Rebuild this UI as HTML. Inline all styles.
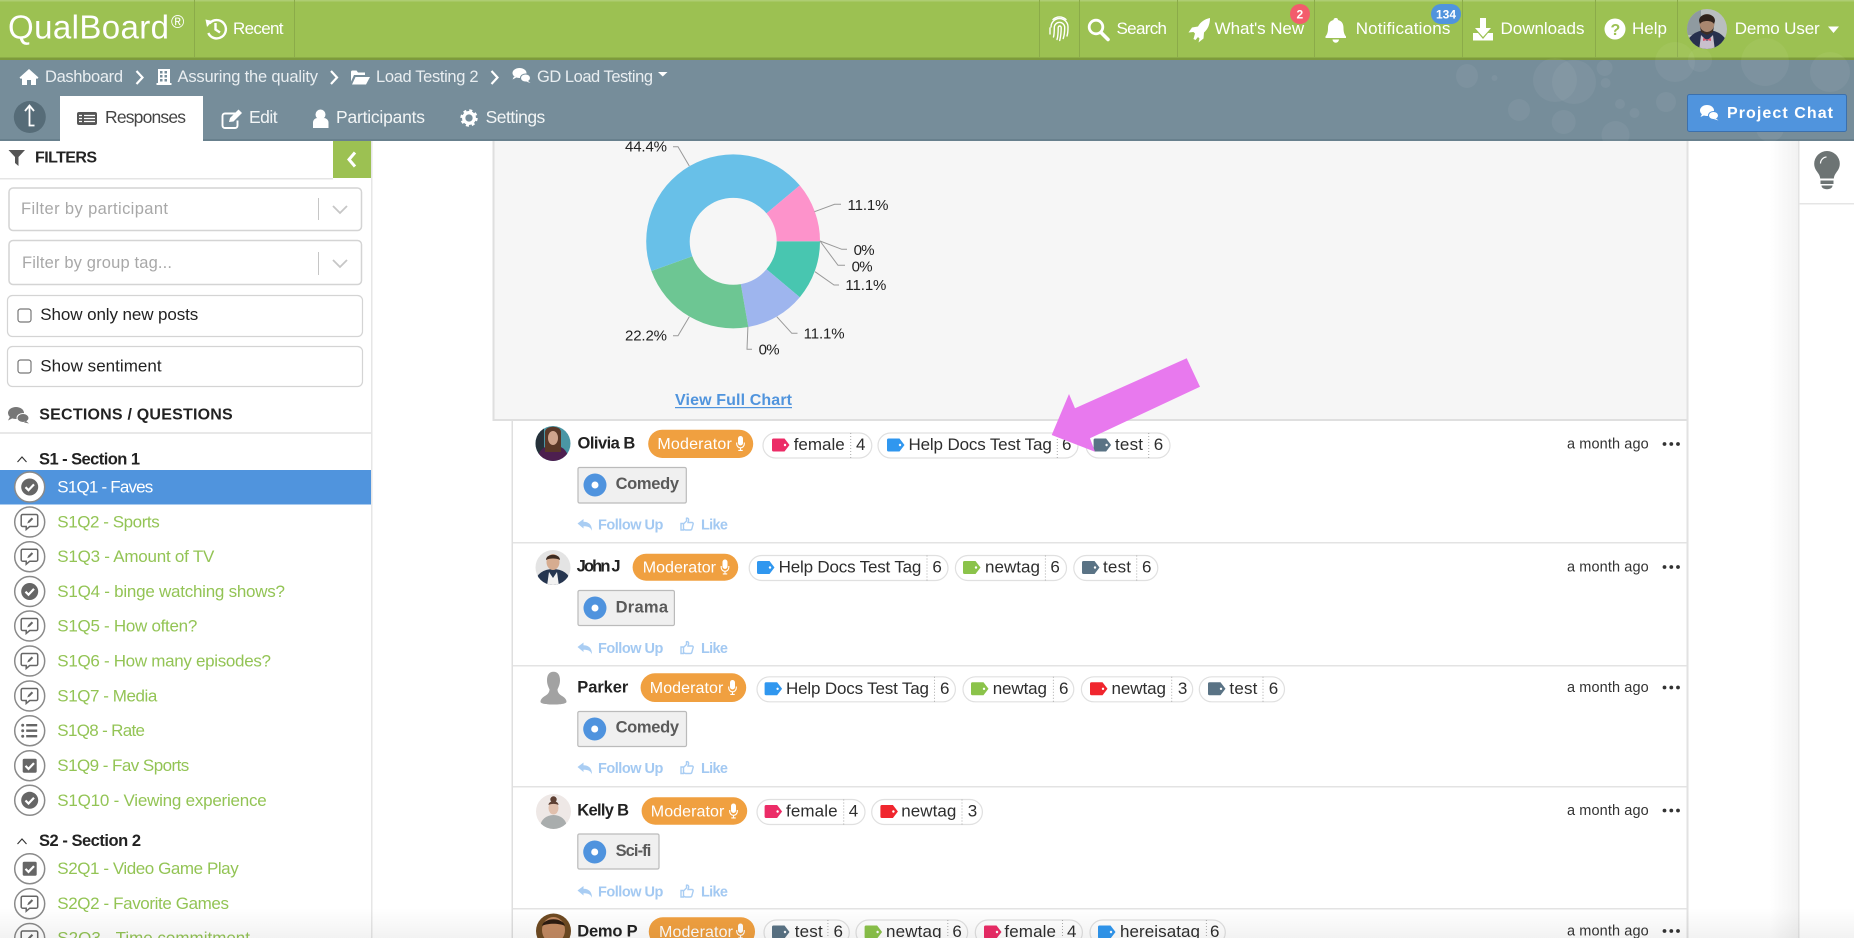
<!DOCTYPE html>
<html lang="en"><head><meta charset="utf-8"><title>QualBoard</title>
<style>
html,body{margin:0;padding:0;width:1854px;height:938px;overflow:hidden;background:#fff}
svg{display:block;filter:blur(.35px)}
text{font-family:"Liberation Sans",sans-serif;font-size:16px;fill:#333}
.n{fill:#fff;font-size:17px}
.b{fill:#e9eef1;font-size:16.500px}
.tb{fill:#f2f5f6;font-size:17.500px}
.ph{fill:#a8a8a8;font-size:16.500px}
.h{font-weight:bold;fill:#222;font-size:16px;transform:translateY(-.7px)}
.q{fill:#93c455;font-size:17px;transform:translateY(-.5px)}
.nm{font-weight:bold;fill:#222;font-size:16.500px}
.mod{fill:#fff;font-size:16px}
.t{fill:#2e2e2e;font-size:17px;transform:translateY(-1px)}
.ans{fill:#5a5a5a;font-size:16.500px;font-weight:bold}
.f{fill:#a3c9f2;font-size:14.500px;font-weight:bold}
.tm{fill:#333;font-size:14.500px}
.c{fill:#222;font-size:15px}
</style></head><body>
<svg xmlns="http://www.w3.org/2000/svg" width="1854" height="938" viewBox="0 0 1854 938" lengthAdjust="spacingAndGlyphs">
<defs>
<linearGradient id="hdr" x1="0" x2="1" y1="0" y2="0"><stop offset="0" stop-color="#7a919e"/><stop offset="1" stop-color="#72889500"/><stop offset="1" stop-color="#728895"/></linearGradient>
<linearGradient id="rs" x1="0" x2="1" y1="0" y2="0"><stop offset="0" stop-color="#fff"/><stop offset="1" stop-color="#f2f2f2"/></linearGradient>
<linearGradient id="bf" x1="0" x2="0" y1="0" y2="1"><stop offset="0" stop-color="#000" stop-opacity="0"/><stop offset="1" stop-color="#000" stop-opacity=".05"/></linearGradient>
<symbol id="tag" width="18" height="13" viewBox="0 0 18 13" overflow="visible"><path fill-rule="evenodd" d="M1.500 0H12.500L17.500 6.500L12.500 13H1.500A1.500 1.500 0 0 1 0 11.500V1.500A1.500 1.500 0 0 1 1.500 0ZM13 5.300a1.200 1.200 0 1 0 .01 0Z"/></symbol>
<symbol id="ck" width="32" height="32" viewBox="0 0 32 32"><circle cx="16" cy="16" r="15" fill="#fff" stroke="#8a8a8a" stroke-width="1.500"/><circle cx="16" cy="16" r="8.500" fill="#666"/><path d="M11.800 16.200l3 3 5.500-5.800" fill="none" stroke="#fff" stroke-width="2.200"/></symbol>
<symbol id="bb" width="32" height="32" viewBox="0 0 32 32"><circle cx="16" cy="16" r="15" fill="#fff" stroke="#8a8a8a" stroke-width="1.500"/><path d="M9.500 8.500h13a1.500 1.500 0 0 1 1.500 1.500v9a1.500 1.500 0 0 1-1.500 1.500h-6.500l-3.500 3v-3h-3.500a1.500 1.500 0 0 1-1.500-1.500v-9a1.500 1.500 0 0 1 1.500-1.500z" fill="none" stroke="#666" stroke-width="1.500"/><path d="M13.500 17.500l1-2.500 3.500-3.500 1.500 1.500-3.500 3.500z" fill="#666"/></symbol>
<symbol id="ls" width="32" height="32" viewBox="0 0 32 32"><circle cx="16" cy="16" r="15" fill="#fff" stroke="#8a8a8a" stroke-width="1.500"/><path d="M12.500 10.500h11M12.500 16h11M12.500 21.500h11" stroke="#666" stroke-width="2.400"/><circle cx="9" cy="10.500" r="1.500" fill="#666"/><circle cx="9" cy="16" r="1.500" fill="#666"/><circle cx="9" cy="21.500" r="1.500" fill="#666"/></symbol>
<symbol id="cb" width="32" height="32" viewBox="0 0 32 32"><circle cx="16" cy="16" r="15" fill="#fff" stroke="#8a8a8a" stroke-width="1.500"/><rect x="9" y="9" width="14" height="14" rx="1.500" fill="#666"/><path d="M11.800 16.200l3 3 5.500-5.800" fill="none" stroke="#fff" stroke-width="2.200"/></symbol>
<symbol id="rp" width="15" height="12" viewBox="0 0 15 12"><path fill="#a9cdf3" d="M0 4.500L6 0v2.800c5 0 8.500 2.800 8.500 9-1.600-3.600-4-4.500-8.500-4.500V9.500z"/></symbol>
<symbol id="th" width="14" height="14" viewBox="0 0 14 14"><path fill="none" stroke="#a9cdf3" stroke-width="1.400" d="M1 6.500h2.500v6.500H1zM3.500 7L6.500 4V1.200c1.500-.5 2.500.7 2 2.500L8 5.500h4c1 0 1.500 1 1 2l-1.200 4.500c-.3.800-.8 1-1.500 1H5.500l-2-.8"/></symbol>
<symbol id="mic" width="9" height="15" viewBox="0 0 9 15"><rect x="2" y="0" width="5" height="9.500" rx="2.500" fill="#fff"/><path d="M.7 6.500v1.500a3.800 3.800 0 0 0 7.600 0V6.500M4.500 12v2.500M2.300 14.400h4.400" fill="none" stroke="#fff" stroke-width="1.100"/></symbol>
<clipPath id="a1"><circle cx="553" cy="443.500" r="17.500"/></clipPath>
<clipPath id="a2"><circle cx="553" cy="567.500" r="17.500"/></clipPath>
<clipPath id="a4"><circle cx="553.500" cy="811.500" r="17.500"/></clipPath>
<clipPath id="a5"><circle cx="553.500" cy="931" r="17.500"/></clipPath>
<clipPath id="au"><circle cx="1707" cy="29" r="20"/></clipPath>
</defs>

<rect width="1854" height="938" fill="#fff"/>

<!-- chart panel -->
<rect x="493.500" y="130" width="1194" height="290" fill="#f6f6f6" stroke="#dfdfdf" stroke-width="2"/>
<rect x="1686.500" y="141" width="2" height="797" fill="#e2e2e2"/>
<rect x="511.500" y="421" width="1.500" height="517" fill="#dfdfdf"/>
<g fill-rule="evenodd">
<path fill="#48c6b0" d="M820 241.300A87 87 0 0 1 799.800 297.200L766.500 269.200A43.500 43.500 0 0 0 776.700 241.300Z"/>
<path fill="#9eb5ee" d="M799.800 297.200A87 87 0 0 1 748.300 327L740.800 284.100A43.500 43.500 0 0 0 766.500 269.200Z"/>
<path fill="#6dc693" d="M748.300 327A87 87 0 0 1 651.400 271L692.300 256.200A43.500 43.500 0 0 0 740.800 284.100Z"/>
<path fill="#68c0e8" d="M651.400 271A87 87 0 0 1 799.800 185.400L766.500 213.400A43.500 43.500 0 0 0 692.300 256.200Z"/>
<path fill="#fd93cb" d="M799.800 185.400A87 87 0 0 1 820 241.300L776.700 241.300A43.500 43.500 0 0 0 766.500 213.400Z"/>
</g>
<g fill="none" stroke="#999" stroke-width="1">
<path d="M689.300 166L678 146.700H673"/><path d="M814.500 211.700L834.600 204.300H841"/><path d="M820 241L841.800 249.300H847"/><path d="M820 241L838 265.300H845"/><path d="M815 271.700L834 285H839"/><path d="M776.800 316.700L791.800 333.300H797.500"/><path d="M747.900 326.700L747 349.300H752"/><path d="M689.300 316.700L678 335.700H673"/>
</g>
<text class="c" x="625" y="151.700" textLength="42">44.4%</text>
<text class="c" x="847.500" y="210" textLength="41">11.1%</text>
<text class="c" x="853.600" y="255" textLength="21">0%</text>
<text class="c" x="851.600" y="271.300" textLength="21">0%</text>
<text class="c" x="845.400" y="290" textLength="41">11.1%</text>
<text class="c" x="803.600" y="338.300" textLength="41">11.1%</text>
<text class="c" x="758.600" y="354.300" textLength="21">0%</text>
<text class="c" x="625" y="340.700" textLength="42">22.2%</text>
<text x="675" y="405" textLength="117" style="fill:#5094dd;font-weight:bold;font-size:16px">View Full Chart</text>
<rect x="675" y="407" width="117" height="1.200" fill="#5094dd"/>

<!-- top bar -->
<rect width="1854" height="60" fill="#9cc152"/>
<rect width="1854" height="1.500" fill="#aecd73"/>
<rect y="57.500" width="1854" height="2.500" fill="#7d9b3c"/>
<g fill="#8bab49">
<rect x="194" y="0" width="1" height="58"/><rect x="294" y="0" width="1" height="58"/>
<rect x="1039" y="0" width="1" height="58"/><rect x="1079" y="0" width="1" height="58"/><rect x="1177" y="0" width="1" height="58"/><rect x="1314" y="0" width="1" height="58"/><rect x="1462" y="0" width="1" height="58"/><rect x="1595" y="0" width="1" height="58"/><rect x="1677" y="0" width="1" height="58"/>
</g>
<text x="8" y="38.500" textLength="161" style="fill:#fff;font-size:33px">QualBoard</text>
<text x="171" y="28" textLength="14" style="fill:#fff;font-size:18px">®</text>
<g fill="none" stroke="#fff" stroke-width="2.400"><path d="M209.500 23.500A9.200 9.200 0 1 1 208.300 33"/><path d="M215.500 23v6.500l4.500 3"/></g>
<path fill="#fff" d="M205.500 19.500l7 1.500-5.500 6z"/>
<text class="n" x="233" y="34" textLength="50.500">Recent</text>
<g fill="none" stroke="#fff" stroke-width="1.400" stroke-linecap="round">
<path d="M1051 27a8.500 8.500 0 0 1 17 0c0 3 0 6-1 9"/><path d="M1050 34v-6"/><path d="M1053.500 37c.8-3 .8-6 .8-9.500a5.200 5.200 0 0 1 10.400 0c0 4 0 7-1.500 11"/><path d="M1057 39.500c1.200-3.500 1.200-8 1.200-12a1.500 1.500 0 0 1 3 0c0 4.500-.2 8-1.500 13"/><path d="M1053 19.500a9.500 9.500 0 0 1 13 0"/>
</g>
<circle cx="1096" cy="27" r="6.800" fill="none" stroke="#fff" stroke-width="2.800"/><path d="M1101 32.500l7 7" stroke="#fff" stroke-width="3.600" stroke-linecap="round"/>
<text class="n" x="1116.500" y="34" textLength="50.500">Search</text>
<path fill="#fff" d="M1210 18c-5.500 1-9.500 4-12 8.500l-6 1-3.500 5 5-.5 1.500 1.500-1.500 5.500 2 1 2.500-3 1.500 1.500-1 4 5-4 .5-6c4-3.500 6-8.500 6-14.500z"/>
<text class="n" x="1214.600" y="34" textLength="89.500">What's New</text>
<path fill="#fff" d="M1336 18c1.300 0 2 .8 2 2 4 1 5.500 4 5.500 8 0 4.500 1 6.500 2.500 8.500v1.500h-20.500v-1.500c1.500-2 2.500-4 2.500-8.500 0-4 1.500-7 5.500-8 0-1.200.7-2 2.500-2z"/><path fill="#fff" d="M1332.500 39.500h6.500a3.200 3.200 0 0 1-6.500 0z"/>
<text class="n" x="1355.700" y="34" textLength="94.700">Notifications</text>
<path fill="#fff" d="M1480 18h6v10h5l-8 9-8-9h5z"/><path fill="#fff" d="M1473 33h5l5 6 5-6h5v7.500h-20z"/>
<text class="n" x="1500.500" y="34" textLength="84">Downloads</text>
<circle cx="1615" cy="29" r="10.500" fill="#fff"/>
<text x="1610.500" y="35" textLength="9" style="font-weight:bold;fill:#9cc152;font-size:16px">?</text>
<text class="n" x="1632" y="34" textLength="35">Help</text>
<rect x="1290" y="4" width="20" height="20" rx="10" fill="#f35c6c"/>
<text x="1296.500" y="18.500" textLength="7" style="fill:#fff;font-size:12px;font-weight:bold">2</text>
<rect x="1431" y="4" width="30" height="20" rx="10" fill="#5094dd"/>
<text x="1436" y="18.500" textLength="20" style="fill:#fff;font-size:12px;font-weight:bold">134</text>
<g clip-path="url(#au)">
<rect x="1687" y="9" width="40" height="40" fill="#b9bec0"/>
<rect x="1687" y="9" width="14" height="26" fill="#8f9aa0"/>
<ellipse cx="1707" cy="47" rx="21" ry="17" fill="#27304d"/>
<path d="M1701 35l6 6 6-6 2 16h-16z" fill="#c9c0cc"/>
<ellipse cx="1707" cy="23" rx="7.500" ry="9" fill="#a98770"/>
<path d="M1699 21c0-9 16-9 16 0l-1 3c-2-4-12-4-14 0z" fill="#2f221c"/>
<path d="M1700 26c2 8 12 8 14 0l-1 6-6 3-6-3z" fill="#3c2d25"/>
<path d="M1703 38l4 1.500 4-1.500v3l-4-1-4 1z" fill="#d8566c"/>
</g>
<text class="n" x="1734.700" y="34" textLength="85">Demo User</text>
<path fill="#fff" d="M1828 26.500h11l-5.500 6.500z"/>

<!-- sub header -->
<rect y="60" width="1854" height="81" fill="#768d9a"/>
<rect y="139" width="1854" height="2" fill="#68808d"/>
<g fill="#fff" fill-opacity=".05">
<ellipse cx="1467" cy="76" rx="11" ry="12"/><circle cx="1494.500" cy="78" r="3"/><circle cx="1519" cy="110" r="11"/><circle cx="1555" cy="80" r="22"/><circle cx="1574" cy="82" r="22"/><circle cx="1604.600" cy="68" r="8"/><circle cx="1605.600" cy="83" r="5"/><circle cx="1620" cy="104" r="5"/><circle cx="1634.500" cy="113" r="5"/><circle cx="1563.700" cy="122" r="12"/><circle cx="1615.500" cy="135" r="14"/><circle cx="1675" cy="62" r="20"/><circle cx="1700" cy="60" r="12"/><circle cx="1765" cy="62" r="24"/><circle cx="1830" cy="72" r="20"/><circle cx="1666" cy="102" r="10"/><circle cx="1770" cy="128" r="14"/>
</g>
<path fill="#fff" d="M29 69l9.500 8.500-1.500 1.500-1-.8V85h-5v-5h-4v5h-5v-6.800l-1 .8-1.500-1.500z"/>
<text class="b" x="45" y="82" textLength="78">Dashboard</text>
<path d="M136.500 71l6 6.500-6 6.500" fill="none" stroke="#fff" stroke-width="2.200"/>
<path fill="#fff" fill-rule="evenodd" d="M158 69h12v14h1.500v2h-15v-2h1.500zM160 71v2.500h2.500V71zm4.500 0v2.500h2.500V71zM160 75v2.500h2.500V75zm4.500 0v2.500h2.500V75zM160 79v2.500h2.500V79zm4.500 0v2.500h2.500V79z"/>
<text class="b" x="177.500" y="82" textLength="140.500">Assuring the quality</text>
<path d="M331 71l6 6.500-6 6.500" fill="none" stroke="#fff" stroke-width="2.200"/>
<path fill="#fff" d="M351 72a1.500 1.500 0 0 1 1.500-1.500h4l1.500 2h7v2.500h-11l-3 6.500zM355.500 77h14.500l-4 7.500h-14z"/>
<text class="b" x="376" y="82" textLength="102.500">Load Testing 2</text>
<path d="M491.500 71l6 6.500-6 6.500" fill="none" stroke="#fff" stroke-width="2.200"/>
<ellipse cx="519.500" cy="73" rx="7" ry="5" fill="#fff"/><path fill="#fff" d="M514 76.500l-1.500 3 4-2z"/><ellipse cx="525.500" cy="78" rx="5" ry="4" fill="#fff" stroke="#778e9b"/><path fill="#fff" d="M528 81l2.500 2-4.500-1.500z"/>
<text class="b" x="537" y="82" textLength="116">GD Load Testing</text>
<path fill="#fff" d="M658 72h9.500l-4.750 4.500z"/>
<ellipse cx="29.800" cy="117" rx="16" ry="16" fill="#566c78"/>
<path d="M29.500 106v19.500h5M25 111l4.500-5.500 4.500 5.500" fill="none" stroke="#fff" stroke-width="1.800"/>
<rect x="60" y="96" width="143" height="45" fill="#fff"/>
<rect x="77" y="112" width="20" height="13" rx="2" fill="#565656"/><path d="M79 115.500h3M84 115.500h11M79 118.500h3M84 118.500h11M79 121.500h3M84 121.500h11" stroke="#fff" stroke-width="1.300"/>
<text x="105" y="123" textLength="81" style="font-size:17.500px;fill:#444">Responses</text>
<path d="M236 113.500h-11a2.500 2.500 0 0 0-2.500 2.500v9.500a2.500 2.500 0 0 0 2.500 2.500h10a2.500 2.500 0 0 0 2.500-2.500v-5" fill="none" stroke="#fff" stroke-width="1.900"/><path fill="#fff" d="M229 122l1-4 8.500-8.500 3.500 3.500-8.500 8.500z"/>
<text class="tb" x="249" y="123" textLength="28.600">Edit</text>
<circle cx="320.500" cy="114.500" r="5" fill="#fff"/><path fill="#fff" d="M313 128v-5.500a4.500 4.500 0 0 1 4-4.500l3.500 1 3.500-1a4.500 4.500 0 0 1 4.500 4.500v5.500z"/>
<text class="tb" x="336" y="123" textLength="89">Participants</text>
<circle cx="469" cy="118" r="5.300" fill="none" stroke="#fff" stroke-width="3.300"/><circle cx="469" cy="118" r="7.500" fill="none" stroke="#fff" stroke-width="2.400" stroke-dasharray="3 2.890"/>
<text class="tb" x="485.600" y="123" textLength="59.700">Settings</text>
<rect x="1687.500" y="94.500" width="159" height="37" rx="2" fill="#5094dd" stroke="#3b70ad"/>
<ellipse cx="1707" cy="110.500" rx="7" ry="5.500" fill="#fff"/><path fill="#fff" d="M1702 114l-1.500 3 4.500-2z"/><ellipse cx="1713.500" cy="115.500" rx="5" ry="4" fill="#fff" stroke="#5094dd"/><path fill="#fff" d="M1716 118.500l2.500 2-5-1.500z"/>
<text x="1727" y="118" textLength="106" style="fill:#fff;font-weight:bold;font-size:16px">Project Chat</text>

<!-- sidebar -->
<rect x="371" y="141" width="1.500" height="797" fill="#e6e6e6"/>
<rect x="0" y="178" width="333" height="1.500" fill="#e5e5e5"/>
<path fill="#555" d="M8.500 150h16.500l-6.500 7v9l-3.500-3v-6z"/>
<text class="h" x="35" y="163" textLength="62">FILTERS</text>
<rect x="333" y="141" width="38" height="37" fill="#9cc152"/>
<path d="M355 152.500l-6 7 6 7" fill="none" stroke="#fff" stroke-width="3"/>
<rect x="9" y="188" width="352.500" height="42.500" rx="4" fill="#fff" stroke="#d4d4d4" stroke-width="1.500"/>
<text class="ph" x="21" y="214" textLength="147">Filter by participant</text>
<rect x="318" y="198" width="1" height="22" fill="#c6c6c6"/>
<path d="M333 206l7 7 7-7" fill="none" stroke="#c6c6c6" stroke-width="1.800"/>
<rect x="9" y="240.500" width="352.500" height="44" rx="4" fill="#fff" stroke="#d4d4d4" stroke-width="1.500"/>
<text class="ph" x="22" y="268" textLength="150">Filter by group tag...</text>
<rect x="318" y="252" width="1" height="23" fill="#c6c6c6"/>
<path d="M333 260l7 7 7-7" fill="none" stroke="#c6c6c6" stroke-width="1.800"/>
<rect x="7.500" y="295.500" width="355" height="41" rx="5" fill="#fff" stroke="#d4d4d4" stroke-width="1.200"/>
<rect x="18" y="309" width="13" height="13" rx="2.500" fill="#fff" stroke="#777" stroke-width="1.200"/>
<text x="40.300" y="320" textLength="158" style="fill:#222;font-size:17px">Show only new posts</text>
<rect x="7.500" y="346.500" width="355" height="40" rx="5" fill="#fff" stroke="#d4d4d4" stroke-width="1.200"/>
<rect x="18" y="360" width="13" height="13" rx="2.500" fill="#fff" stroke="#777" stroke-width="1.200"/>
<text x="40.300" y="371.700" textLength="121.300" style="fill:#222;font-size:17px">Show sentiment</text>
<ellipse cx="16" cy="413" rx="8" ry="6" fill="#777"/><path fill="#777" d="M10 416.500l-2 4 5-2.500z"/><ellipse cx="23" cy="418" rx="6" ry="4.500" fill="#777" stroke="#fff"/><path fill="#777" d="M26 421l3 2.500-5-1z"/>
<text class="h" x="39.300" y="420" textLength="193.400">SECTIONS / QUESTIONS</text>
<rect x="0" y="432" width="371" height="2" fill="#e8e8e8"/>
<path d="M17.500 462l4.500-5 4.500 5" fill="none" stroke="#333" stroke-width="1.100"/>
<text class="h" x="39" y="465" textLength="101" style="font-size:16.500px">S1 - Section 1</text>
<rect x="0" y="470" width="371" height="34.500" fill="#5094dd"/>
<use href="#ck" x="13.700" y="471"/><use href="#bb" x="13.700" y="506"/><use href="#bb" x="13.700" y="540.700"/><use href="#ck" x="13.700" y="575.500"/><use href="#bb" x="13.700" y="610"/><use href="#bb" x="13.700" y="645"/><use href="#bb" x="13.700" y="680"/><use href="#ls" x="13.700" y="714.700"/><use href="#cb" x="13.700" y="749.700"/><use href="#ck" x="13.700" y="784.300"/>
<use href="#cb" x="13.700" y="852.700"/><use href="#bb" x="13.700" y="887.700"/><use href="#bb" x="13.700" y="922.500"/>
<text class="q" x="57.300" y="493" textLength="96" style="fill:#fff">S1Q1 - Faves</text>
<text class="q" x="57.300" y="528" textLength="102.400">S1Q2 - Sports</text>
<text class="q" x="57.300" y="562.700" textLength="157">S1Q3 - Amount of TV</text>
<text class="q" x="57.300" y="597.500" textLength="227.700">S1Q4 - binge watching shows?</text>
<text class="q" x="57.300" y="632" textLength="140">S1Q5 - How often?</text>
<text class="q" x="57.300" y="667" textLength="213.700">S1Q6 - How many episodes?</text>
<text class="q" x="57.300" y="702" textLength="100">S1Q7 - Media</text>
<text class="q" x="57.300" y="736.700" textLength="87.700">S1Q8 - Rate</text>
<text class="q" x="57.300" y="771.700" textLength="132">S1Q9 - Fav Sports</text>
<text class="q" x="57.300" y="806.300" textLength="209.400">S1Q10 - Viewing experience</text>
<path d="M17.500 844l4.500-5 4.500 5" fill="none" stroke="#333" stroke-width="1.100"/>
<text class="h" x="39" y="846.700" textLength="102" style="font-size:16.500px">S2 - Section 2</text>
<text class="q" x="57.300" y="874.700" textLength="181.400">S2Q1 - Video Game Play</text>
<text class="q" x="57.300" y="909.700" textLength="171.700">S2Q2 - Favorite Games</text>
<text class="q" x="57.300" y="944" textLength="192.700">S2Q3 - Time commitment</text>

<!-- right rail -->
<rect x="1770" y="141" width="28" height="797" fill="url(#rs)"/>
<rect x="1798" y="141" width="1.500" height="797" fill="#e3e3e3"/>
<rect x="1799" y="203" width="55" height="1.500" fill="#e5e5e5"/>
<path fill="#6d7474" d="M1827 151a12.800 12.800 0 0 1 12.800 12.800c0 4.500-2.300 7-4.300 10-1 1.500-1.500 3-1.700 4.700h-13.600c-.2-1.700-.7-3.200-1.700-4.700-2-3-4.300-5.500-4.300-10A12.800 12.800 0 0 1 1827 151z"/>
<path d="M1820.500 163.500a6.500 6.500 0 0 1 6-6.500" fill="none" stroke="#fff" stroke-width="1.200"/>
<path fill="#6d7474" d="M1820.500 180.500h13v3.500h-13zM1821.500 185.500h11c0 2.200-2 3.700-5.500 3.700s-5.500-1.500-5.500-3.700z"/>

<g fill="#e3e3e3">
<rect x="513" y="542" width="1174" height="1.500"/><rect x="513" y="665" width="1174" height="1.500"/><rect x="513" y="786" width="1174" height="1.500"/><rect x="513" y="908" width="1174" height="1.500"/>
</g>

<!-- POST 1 -->
<g clip-path="url(#a1)"><rect x="535" y="426" width="36" height="36" fill="#4a96a5"/><rect x="535" y="426" width="9" height="36" fill="#26313a"/><ellipse cx="553" cy="458" rx="15" ry="13" fill="#4d1f4f"/><path d="M545 432c0-7 16-7 16 0v20h-16z" fill="#5a3828"/><ellipse cx="553" cy="438" rx="5" ry="7" fill="#cfa48d"/></g>
<text class="nm" x="577.500" y="448.700" textLength="57.800">Olivia B</text>
<rect x="648.200" y="429.700" width="105" height="28.300" rx="14" fill="#f0a040"/>
<text class="mod" x="657.400" y="449" textLength="74.400">Moderator</text><use href="#mic" x="736" y="436"/>
<rect x="763" y="433" width="108.800" height="25" rx="12.500" fill="#fff" stroke="#e0e0e0" stroke-width="1.200"/>
<use href="#tag" x="772" y="438.500" fill="#ec2c67"/><text class="t" x="793.700" y="451" textLength="51">female</text><path d="M850.700 433v25" stroke="#aaa" stroke-dasharray="1 2"/><text class="t" x="856" y="451" textLength="9">4</text>
<rect x="878" y="433" width="200" height="25" rx="12.500" fill="#fff" stroke="#e0e0e0" stroke-width="1.200"/>
<use href="#tag" x="887" y="438.500" fill="#3097ef"/><text class="t" x="908.500" y="451" textLength="143.300">Help Docs Test Tag</text><path d="M1057.300 433v25" stroke="#aaa" stroke-dasharray="1 2"/><text class="t" x="1062" y="451" textLength="9">6</text>
<rect x="1086" y="433" width="84" height="25" rx="12.500" fill="#fff" stroke="#e0e0e0" stroke-width="1.200"/>
<use href="#tag" x="1093.600" y="438.500" fill="#5a7385"/><text class="t" x="1115" y="451" textLength="28">test</text><path d="M1148.700 433v25" stroke="#aaa" stroke-dasharray="1 2"/><text class="t" x="1153.700" y="451" textLength="9">6</text>
<rect x="578" y="467.500" width="108.300" height="35.500" rx="1.500" fill="#f0f0f0" stroke="#bbb" stroke-width="1.200"/>
<circle cx="595" cy="485" r="11.500" fill="#4f93de"/><circle cx="595" cy="485" r="3.500" fill="#fff"/>
<text class="ans" x="615.600" y="489" textLength="63.400">Comedy</text>
<use href="#rp" x="577.500" y="519"/><text class="f" x="598" y="529.300" textLength="65.400">Follow Up</text><use href="#th" x="680" y="517"/><text class="f" x="701" y="529.300" textLength="27">Like</text>
<text class="tm" x="1567" y="448.300" textLength="81.700">a month ago</text>
<g fill="#333"><circle cx="1664.500" cy="444" r="1.900"/><circle cx="1671.300" cy="444" r="1.900"/><circle cx="1678" cy="444" r="1.900"/></g>

<!-- POST 2 -->
<g clip-path="url(#a2)"><rect x="535" y="550" width="36" height="36" fill="#e4e4e4"/><ellipse cx="553" cy="581" rx="17" ry="12" fill="#263650"/><path d="M549 572l4 6 4-6 2 14h-12z" fill="#f2f2f2"/><ellipse cx="553" cy="562" rx="6.500" ry="8" fill="#d6ac90"/><path d="M546 560c0-7 14-7 14 0-3-2-11-2-14 0z" fill="#3e2c22"/></g>
<text class="nm" x="576.600" y="571.700" textLength="44">John J</text>
<rect x="632.600" y="553.700" width="105.600" height="27" rx="13.500" fill="#f0a040"/>
<text class="mod" x="642.700" y="572.500" textLength="73.300">Moderator</text><use href="#mic" x="720.500" y="559.500"/>
<rect x="749.200" y="555.500" width="198.800" height="25" rx="12.500" fill="#fff" stroke="#e0e0e0" stroke-width="1.200"/>
<use href="#tag" x="757" y="561" fill="#3097ef"/><text class="t" x="778.600" y="573.500" textLength="142.800">Help Docs Test Tag</text><path d="M927 555.500v25" stroke="#aaa" stroke-dasharray="1 2"/><text class="t" x="932.400" y="573.500" textLength="9">6</text>
<rect x="955.400" y="555.500" width="111.100" height="25" rx="12.500" fill="#fff" stroke="#e0e0e0" stroke-width="1.200"/>
<use href="#tag" x="963" y="561" fill="#8bc34a"/><text class="t" x="985" y="573.500" textLength="55">newtag</text><path d="M1045.400 555.500v25" stroke="#aaa" stroke-dasharray="1 2"/><text class="t" x="1050.400" y="573.500" textLength="9">6</text>
<rect x="1073.800" y="555.500" width="84" height="25" rx="12.500" fill="#fff" stroke="#e0e0e0" stroke-width="1.200"/>
<use href="#tag" x="1082" y="561" fill="#5a7385"/><text class="t" x="1103" y="573.500" textLength="28">test</text><path d="M1136.700 555.500v25" stroke="#aaa" stroke-dasharray="1 2"/><text class="t" x="1142" y="573.500" textLength="9">6</text>
<rect x="578" y="590.500" width="96.400" height="35" rx="1.500" fill="#f0f0f0" stroke="#bbb" stroke-width="1.200"/>
<circle cx="595" cy="608" r="11.500" fill="#4f93de"/><circle cx="595" cy="608" r="3.500" fill="#fff"/>
<text class="ans" x="615.600" y="612.700" textLength="52.400">Drama</text>
<use href="#rp" x="577.500" y="642.500"/><text class="f" x="598" y="653" textLength="65.400">Follow Up</text><use href="#th" x="680" y="640.500"/><text class="f" x="701" y="653" textLength="27">Like</text>
<text class="tm" x="1567" y="571.500" textLength="81.700">a month ago</text>
<g fill="#333"><circle cx="1664.500" cy="567" r="1.900"/><circle cx="1671.300" cy="567" r="1.900"/><circle cx="1678" cy="567" r="1.900"/></g>

<!-- POST 3 -->
<path fill="#a2a2a2" d="M553.500 671.700c4.500 0 6.500 3.500 6.500 8.500 0 4-1.500 7-2.500 9 0 3 1.500 5 5 7 2.500 1.500 4 3.500 4 5.500 0 2-6 2.800-13 2.800s-13-.8-13-2.800c0-2 1.500-4 4-5.500 3.500-2 5-4 5-7-1-2-2.500-5-2.500-9 0-5 2-8.500 6.500-8.500z"/>
<text class="nm" x="577.300" y="692.700" textLength="51">Parker</text>
<rect x="640.600" y="673.300" width="105.600" height="28.700" rx="14.300" fill="#f0a040"/>
<text class="mod" x="649.800" y="693" textLength="73.500">Moderator</text><use href="#mic" x="728" y="680"/>
<rect x="757" y="676.800" width="198.400" height="25" rx="12.500" fill="#fff" stroke="#e0e0e0" stroke-width="1.200"/>
<use href="#tag" x="764.600" y="682.300" fill="#3097ef"/><text class="t" x="786" y="695" textLength="143">Help Docs Test Tag</text><path d="M934.500 676.800v25" stroke="#aaa" stroke-dasharray="1 2"/><text class="t" x="940" y="695" textLength="9">6</text>
<rect x="963" y="676.800" width="110.800" height="25" rx="12.500" fill="#fff" stroke="#e0e0e0" stroke-width="1.200"/>
<use href="#tag" x="971" y="682.300" fill="#8bc34a"/><text class="t" x="992.700" y="695" textLength="54.300">newtag</text><path d="M1053.400 676.800v25" stroke="#aaa" stroke-dasharray="1 2"/><text class="t" x="1059" y="695" textLength="9">6</text>
<rect x="1081.400" y="676.800" width="111.300" height="25" rx="12.500" fill="#fff" stroke="#e0e0e0" stroke-width="1.200"/>
<use href="#tag" x="1090" y="682.300" fill="#f0262e"/><text class="t" x="1111.500" y="695" textLength="54.500">newtag</text><path d="M1171.700 676.800v25" stroke="#aaa" stroke-dasharray="1 2"/><text class="t" x="1177.900" y="695" textLength="9">3</text>
<rect x="1199.300" y="676.800" width="85.200" height="25" rx="12.500" fill="#fff" stroke="#e0e0e0" stroke-width="1.200"/>
<use href="#tag" x="1208" y="682.300" fill="#5a7385"/><text class="t" x="1229.400" y="695" textLength="28">test</text><path d="M1263 676.800v25" stroke="#aaa" stroke-dasharray="1 2"/><text class="t" x="1268.700" y="695" textLength="9">6</text>
<rect x="577.800" y="711.500" width="108.700" height="35" rx="1.500" fill="#f0f0f0" stroke="#bbb" stroke-width="1.200"/>
<circle cx="594.700" cy="729" r="11.500" fill="#4f93de"/><circle cx="594.700" cy="729" r="3.500" fill="#fff"/>
<text class="ans" x="615.600" y="732.700" textLength="63.400">Comedy</text>
<use href="#rp" x="577.500" y="762.500"/><text class="f" x="598" y="773" textLength="65.400">Follow Up</text><use href="#th" x="680" y="760.500"/><text class="f" x="701" y="773" textLength="27">Like</text>
<text class="tm" x="1567" y="692" textLength="81.700">a month ago</text>
<g fill="#333"><circle cx="1664.500" cy="687.500" r="1.900"/><circle cx="1671.300" cy="687.500" r="1.900"/><circle cx="1678" cy="687.500" r="1.900"/></g>

<!-- POST 4 -->
<g clip-path="url(#a4)"><rect x="535" y="794" width="37" height="36" fill="#eee8e6"/><ellipse cx="553.500" cy="826" rx="13" ry="11" fill="#a9adad"/><ellipse cx="553.500" cy="808" rx="5" ry="6.500" fill="#e1c0ad"/><circle cx="553.500" cy="799.500" r="3.200" fill="#5e4033"/><path d="M548.500 805c0-5 10-5 10 0-3-1.500-7-1.500-10 0z" fill="#5e4033"/></g>
<text class="nm" x="577.300" y="815.700" textLength="51.700">Kelly B</text>
<rect x="641.600" y="797.300" width="105.600" height="27.400" rx="13.700" fill="#f0a040"/>
<text class="mod" x="650.800" y="816.500" textLength="73.500">Moderator</text><use href="#mic" x="729" y="803.500"/>
<rect x="757" y="799.500" width="108" height="25" rx="12.500" fill="#fff" stroke="#e0e0e0" stroke-width="1.200"/>
<use href="#tag" x="764.600" y="805" fill="#ec2c67"/><text class="t" x="786" y="817.500" textLength="51.600">female</text><path d="M843.700 799.500v25" stroke="#aaa" stroke-dasharray="1 2"/><text class="t" x="848.800" y="817.500" textLength="9">4</text>
<rect x="871.700" y="799.500" width="110.700" height="25" rx="12.500" fill="#fff" stroke="#e0e0e0" stroke-width="1.200"/>
<use href="#tag" x="880.400" y="805" fill="#f0262e"/><text class="t" x="901.300" y="817.500" textLength="55">newtag</text><path d="M962 799.500v25" stroke="#aaa" stroke-dasharray="1 2"/><text class="t" x="967.700" y="817.500" textLength="9">3</text>
<rect x="577.800" y="834" width="81.200" height="35" rx="1.500" fill="#f0f0f0" stroke="#bbb" stroke-width="1.200"/>
<circle cx="594.700" cy="852" r="11.500" fill="#4f93de"/><circle cx="594.700" cy="852" r="3.500" fill="#fff"/>
<text class="ans" x="615.600" y="856" textLength="35.700">Sci-fi</text>
<use href="#rp" x="577.500" y="886"/><text class="f" x="598" y="896.700" textLength="65.400">Follow Up</text><use href="#th" x="680" y="884"/><text class="f" x="701" y="896.700" textLength="27">Like</text>
<text class="tm" x="1567" y="815" textLength="81.700">a month ago</text>
<g fill="#333"><circle cx="1664.500" cy="810.500" r="1.900"/><circle cx="1671.300" cy="810.500" r="1.900"/><circle cx="1678" cy="810.500" r="1.900"/></g>

<!-- POST 5 -->
<g clip-path="url(#a5)"><rect x="535" y="913" width="37" height="36" fill="#6e4a22"/><ellipse cx="553.500" cy="930" rx="11.500" ry="13" fill="#c38a62"/><path d="M542 926c2-9 21-9 23 0-5-3-18-3-23 0z" fill="#2d1c10"/></g>
<text class="nm" x="577.300" y="936.700" textLength="60.300">Demo P</text>
<rect x="648.800" y="917.300" width="106.200" height="28.700" rx="14" fill="#f0a040"/>
<text class="mod" x="659" y="937" textLength="74">Moderator</text><use href="#mic" x="736" y="923.500"/>
<rect x="764" y="920" width="85.300" height="25" rx="12.500" fill="#fff" stroke="#e0e0e0" stroke-width="1.200"/>
<use href="#tag" x="772" y="925.500" fill="#5a7385"/><text class="t" x="794.700" y="938" textLength="28">test</text><path d="M827.900 920v25" stroke="#aaa" stroke-dasharray="1 2"/><text class="t" x="833.500" y="938" textLength="9">6</text>
<rect x="856" y="920" width="111.700" height="25" rx="12.500" fill="#fff" stroke="#e0e0e0" stroke-width="1.200"/>
<use href="#tag" x="864.600" y="925.500" fill="#8bc34a"/><text class="t" x="886" y="938" textLength="55.600">newtag</text><path d="M947.800 920v25" stroke="#aaa" stroke-dasharray="1 2"/><text class="t" x="952.400" y="938" textLength="9">6</text>
<rect x="975.300" y="920" width="107.100" height="25" rx="12.500" fill="#fff" stroke="#e0e0e0" stroke-width="1.200"/>
<use href="#tag" x="984" y="925.500" fill="#ec2c67"/><text class="t" x="1004.400" y="938" textLength="51.600">female</text><path d="M1062.500 920v25" stroke="#aaa" stroke-dasharray="1 2"/><text class="t" x="1067" y="938" textLength="9">4</text>
<rect x="1090" y="920" width="135.300" height="25" rx="12.500" fill="#fff" stroke="#e0e0e0" stroke-width="1.200"/>
<use href="#tag" x="1098" y="925.500" fill="#3097ef"/><text class="t" x="1120" y="938" textLength="80">hereisatag</text><path d="M1206.400 920v25" stroke="#aaa" stroke-dasharray="1 2"/><text class="t" x="1210" y="938" textLength="9">6</text>
<text class="tm" x="1567" y="935.500" textLength="81.700">a month ago</text>
<g fill="#333"><circle cx="1664.500" cy="931" r="1.900"/><circle cx="1671.300" cy="931" r="1.900"/><circle cx="1678" cy="931" r="1.900"/></g>

<rect x="0" y="908" width="1854" height="30" fill="url(#bf)"/>
<path fill="#e879ee" d="M1186.700 358.300L1200 386.700L1090 438.300L1095 451.700L1051.700 435L1069 394L1075 408.300Z"/>
</svg>
</body></html>
